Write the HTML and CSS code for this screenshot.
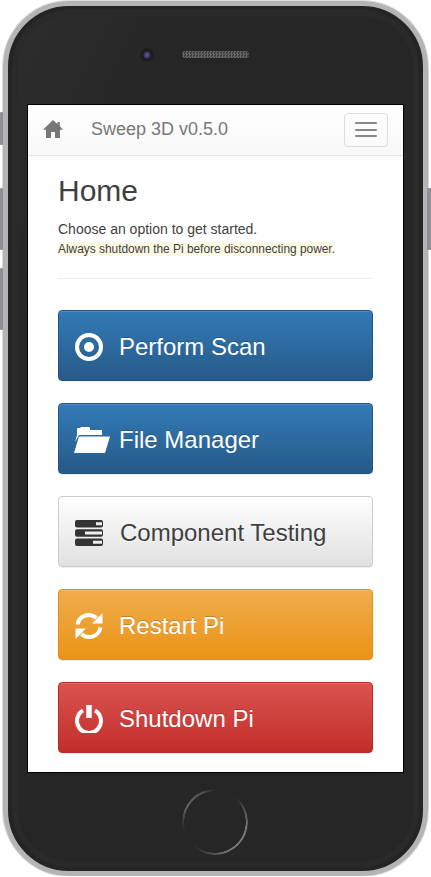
FILE: index.html
```html
<!DOCTYPE html>
<html lang="en">
<head>
    <meta charset="UTF-8">
    <meta name="viewport" content="width=device-width, initial-scale=1.0">
    <title>Sweep 3D</title>
    <link rel="stylesheet" href="styles.css">
</head>
<body>
    <div class="phone">
        <span class="side-btn side-mute"></span>
        <span class="side-btn side-vol-up"></span>
        <span class="side-btn side-vol-down"></span>
        <span class="side-btn side-power"></span>

        <div class="phone-top">
            <span class="camera"></span>
            <span class="speaker"></span>
        </div>

        <div class="screen">
            <nav class="navbar">
                <svg class="nav-home" viewBox="0 0 20 18" aria-hidden="true">
                    <path d="M10 0L14.500 4V2H16.800V6.100L20 9.800H17V18H12V12H8V18H3V9.800H0Z"/>
                </svg>
                <a class="brand" href="#">Sweep 3D v0.5.0</a>
                <button class="nav-toggle" aria-label="Menu">
                    <span></span>
                    <span></span>
                    <span></span>
                </button>
            </nav>

            <main class="content">
                <h2>Home</h2>
                <p class="lead-text">Choose an option to get started.</p>
                <p class="note"><mark>Always shutdown the Pi before disconnecting power.</mark></p>
                <hr>

                <div class="actions">
                    <a class="btn btn-primary" href="#">
                        <span class="btn-icon">
                            <svg width="28" height="28" viewBox="0 0 28 28" aria-hidden="true">
                                <circle cx="14" cy="14" r="12" fill="none" stroke="#fff" stroke-width="4"/>
                                <circle cx="14" cy="14" r="5" fill="#fff"/>
                            </svg>
                        </span>
                        Perform Scan
                    </a>
                    <a class="btn btn-primary" href="#">
                        <span class="btn-icon">
                            <svg class="icon-folder" width="36" height="26" viewBox="0 0 36 26" aria-hidden="true">
                                <path fill="#fff" d="M1 15L3 8V2Q3 1 4 1H6L7 0H15L16 1V3H28V8H5Z"/>
                                <path fill="#fff" d="M5 9.500H36L31 26H0Z"/>
                            </svg>
                        </span>
                        File Manager
                    </a>
                    <a class="btn btn-default" href="#">
                        <span class="btn-icon btn-icon-wide">
                            <svg width="28" height="26" viewBox="0 0 28 26" aria-hidden="true">
                                <rect y="0" width="28" height="7.500" rx="2" fill="#333"/>
                                <rect y="9.250" width="28" height="7.500" rx="2" fill="#333"/>
                                <rect y="18.500" width="28" height="7.500" rx="2" fill="#333"/>
                                <rect x="21" y="2.250" width="6" height="3" fill="#eee"/>
                                <rect x="10" y="11.500" width="17" height="3" fill="#eee"/>
                                <rect x="18" y="20.750" width="9" height="3" fill="#eee"/>
                            </svg>
                        </span>
                        Component Testing
                    </a>
                    <a class="btn btn-warning" href="#">
                        <span class="btn-icon">
                            <svg width="28" height="28" viewBox="0 0 28 28" aria-hidden="true">
                                <g id="refresh-half">
                                    <path d="M2.500 12.500A11.500 11.500 0 0 1 21.500 6" fill="none" stroke="#fff" stroke-width="4"/>
                                    <path d="M27.500 1V11.500H17Z" fill="#fff"/>
                                </g>
                                <use href="#refresh-half" transform="rotate(180 14 14)"/>
                            </svg>
                        </span>
                        Restart Pi
                    </a>
                    <a class="btn btn-danger" href="#">
                        <span class="btn-icon">
                            <svg width="28" height="28" viewBox="0 0 28 28" aria-hidden="true">
                                <path d="M8 5.500A12 12 0 1 0 20 5.500" fill="none" stroke="#fff" stroke-width="4"/>
                                <path d="M14 0V13" fill="none" stroke="#fff" stroke-width="5.500"/>
                            </svg>
                        </span>
                        Shutdown Pi
                    </a>
                </div>
            </main>
        </div>

        <div class="phone-bottom">
            <span class="home-key"></span>
        </div>
    </div>
</body>
</html>
```

FILE: styles.css
```css
body {
    margin: 0;
    background: #fff;
    font-family: 'Liberation Sans', Arial, sans-serif;
    color: #3f3f3f;
}

/* phone shell */
.phone {
    position: relative;
    box-sizing: border-box;
    width: 425px;
    height: 875px;
    margin: 1px 0 0 3px;
    padding: 0 0 0 20px;
    border: 5px solid #b4b4b4;
    border-radius: 66px;
    background: linear-gradient(115deg, #2e2e2e 0%, #262626 22%, #262626 100%);
    box-shadow: inset 0 0 0 4px #242424, inset 0 0 0 10px #2a2a2a, 0 0 0 1px #dcdcdc;
}
.side-btn {
    position: absolute;
    width: 3px;
    background: #8f8f98;
    border-radius: 1px;
}
.side-mute {
    left: -8px;
    top: 106px;
    height: 33px;
}
.side-vol-up {
    left: -8px;
    top: 182px;
    height: 62px;
}
.side-vol-down {
    left: -8px;
    top: 262px;
    height: 62px;
}
.side-power {
    right: -8px;
    top: 182px;
    height: 62px;
    width: 4px;
}

.phone-top {
    display: flex;
    align-items: center;
    height: 99px;
    padding-left: 112px;
    box-sizing: border-box;
}
.camera {
    width: 14px;
    height: 14px;
    margin-top: -2px;
    border-radius: 50%;
    background: radial-gradient(circle, #6a5a9c 0, #3a2f66 3px, #1c1c20 4px, #1e1e1e 7px);
}
.speaker {
    width: 67px;
    height: 7px;
    margin: -2px 0 0 28px;
    border-radius: 4px;
    background: repeating-conic-gradient(#666 0 25%, #3c3c3c 0 50%) 0 0 / 3px 3px;
}

.screen {
    width: 375px;
    height: 667px;
    background: #fff;
    overflow: hidden;
    box-shadow: 0 0 0 1px #000;
}

/* navbar */
.navbar {
    display: flex;
    align-items: center;
    box-sizing: border-box;
    height: 51px;
    padding: 0 15px 0 15px;
    background: linear-gradient(to bottom, #fff 0%, #f8f8f8 100%);
    border-bottom: 1px solid #e7e7e7;
    box-shadow: 0 1px 5px rgba(0, 0, 0, .05);
}
.nav-home {
    width: 20px;
    height: 18px;
    margin-bottom: 2px;
    fill: #777;
}
.brand {
    margin-left: 28px;
    font-size: 18px;
    color: #777;
    text-decoration: none;
    margin-bottom: 2px;
}
.nav-toggle {
    display: flex;
    flex-direction: column;
    justify-content: center;
    gap: 4.500px;
    box-sizing: border-box;
    width: 44px;
    height: 34px;
    margin: 0 0 1px auto;
    padding: 0 10px;
    background: transparent;
    border: 1px solid #ddd;
    border-radius: 4px;
}
.nav-toggle span {
    display: block;
    width: 22px;
    height: 2px;
    background: #888;
    border-radius: 1px;
}

/* page content */
.content {
    padding: 0 30px;
}
h2 {
    margin: 18px 0 12px;
    font-size: 30px;
    font-weight: 500;
    line-height: 33px;
}
.lead-text {
    margin: 0;
    font-size: 14px;
    line-height: 20px;
}
.note {
    margin: 0;
    font-size: 11.900px;
    line-height: 20px;
}
mark {
    padding: 0;
    background: #fcf8e3;
    color: #3f3f3f;
}
hr {
    margin: 19px 0 0;
    border: 0;
    border-top: 1px solid #eee;
}

.actions {
    display: flex;
    flex-direction: column;
    gap: 22px;
    margin-top: 31px;
}
.btn {
    display: flex;
    align-items: center;
    box-sizing: border-box;
    height: 71px;
    padding: 2px 0 0 16px;
    border: 1px solid transparent;
    border-radius: 4px;
    font-size: 24px;
    color: #fff;
    text-decoration: none;
    text-shadow: 0 -1px 0 rgba(0, 0, 0, .2);
    box-shadow: inset 0 1px 0 rgba(255, 255, 255, .15), 0 1px 1px rgba(0, 0, 0, .075);
}
.btn-icon {
    display: flex;
    flex: none;
    width: 44px;
}
.btn-icon-wide {
    width: 45px;
}
.icon-folder {
    margin-left: -1px;
}
.btn-primary {
    background: linear-gradient(to bottom, #337ab7 0%, #265a88 100%);
    border-color: #245580;
}
.btn-default {
    background: linear-gradient(to bottom, #fff 0%, #e0e0e0 100%);
    border-color: #ccc;
    color: #3f3f3f;
    text-shadow: 0 1px 0 #fff;
}
.btn-warning {
    background: linear-gradient(to bottom, #f0ad4e 0%, #eb9316 100%);
    border-color: #e38d13;
}
.btn-danger {
    background: linear-gradient(to bottom, #d9534f 0%, #c12e2a 100%);
    border-color: #b92c28;
}

/* phone bottom */
.phone-bottom {
    display: flex;
    justify-content: center;
    padding: 17px 0 0 0;
    margin-left: -20px;
}
.home-key {
    width: 66px;
    height: 66px;
    margin-left: -1px;
    border-radius: 50%;
    background: conic-gradient(transparent 0deg, transparent 40deg, #777 95deg, #777 150deg, transparent 222deg, transparent 255deg, #666 300deg, #555 335deg, transparent 360deg);
    -webkit-mask: radial-gradient(circle, transparent 30.500px, #000 31px);
    mask: radial-gradient(circle, transparent 30.500px, #000 31px);
}
```
